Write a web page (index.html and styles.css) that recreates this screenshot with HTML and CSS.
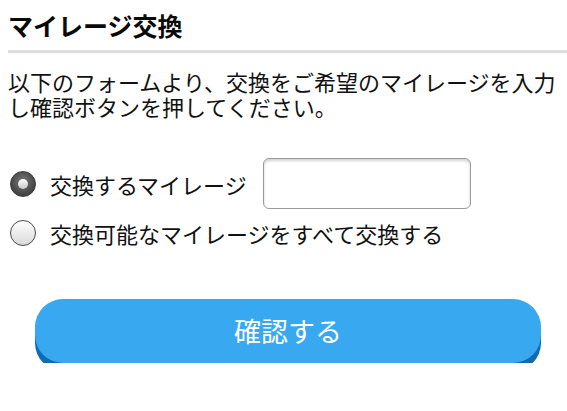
FILE: index.html
```html
<!DOCTYPE html>
<html lang="ja">
<head>
<meta charset="utf-8">
<link rel="stylesheet" href="styles.css">
</head>
<body>
<div class="page">
  <h1 class="title">マイレージ交換</h1>
  <p class="lead">以下のフォームより、交換をご希望のマイレージを入力し確認ボタンを押してください。</p>
  <form class="form">
    <label class="row">
      <input type="radio" name="mode" class="radio" checked>
      <span class="label">交換するマイレージ</span>
      <input type="text" class="field">
    </label>
    <label class="row row-all">
      <input type="radio" name="mode" class="radio">
      <span class="label">交換可能なマイレージをすべて交換する</span>
    </label>
    <div class="actions">
      <button type="button" class="btn">確認する</button>
    </div>
  </form>
</div>
</body>
</html>
```
FILE: styles.css
```css
* { box-sizing: border-box; }
html, body { margin: 0; padding: 0; background: #fff; }
body {
  font-family: "Noto Sans CJK JP", "Noto Sans", sans-serif;
  color: #111;
}
.page { padding: 9px 0 0 8px; }
.title {
  margin: 0;
  font-size: 25px;
  font-weight: bold;
  line-height: 32px;
  padding-bottom: 9px;
  border-bottom: 3px solid #dedede;
  color: #0a0a0a;
}
.lead {
  margin: 16px 0 0 0;
  padding-right: 8px;
  font-size: 22px;
  line-height: 25px;
  color: #111;
}
.form { margin-top: 39px; }
.row {
  display: flex;
  align-items: center;
}
.row-all { margin-top: 9px; height: 30px; }
.radio {
  appearance: none;
  -webkit-appearance: none;
  margin: 0 14px 0 2px;
  width: 26px;
  height: 26px;
  border-radius: 50%;
  border: 1.5px solid #4a4a4a;
  background: linear-gradient(#ffffff, #d9d9d9);
  flex: none;
  position: relative;
}
.radio:checked {
  border-color: #3a3a3a;
  background: radial-gradient(circle at 50% 40%, #7a7a7a 0%, #4a4a4a 60%, #2e2e2e 100%);
}
.radio:checked::after {
  content: "";
  position: absolute;
  left: 50%;
  top: 50%;
  width: 10px;
  height: 10px;
  margin: -5px 0 0 -5px;
  border-radius: 50%;
  background: linear-gradient(#ffffff, #c8c8c8);
}
.label {
  font-size: 22px;
  line-height: 30px;
}
.field {
  margin-left: 16px;
  width: 208px;
  height: 51px;
  border: 1px solid #9a9a9a;
  border-radius: 6px;
  box-shadow: inset 0 2px 3px rgba(0,0,0,0.18);
  background: #fff;
  font-size: 20px;
}
.actions {
  margin-top: 51px;
  padding-left: 27px;
}
.btn {
  display: block;
  width: 506px;
  height: 64px;
  border: 0;
  border-radius: 28px;
  background: #38a8f0;
  box-shadow: 0 8px 0 #0c6db4;
  color: #fff;
  font-family: "Noto Sans CJK JP", "Noto Sans", sans-serif;
  font-size: 27px;
  line-height: 64px;
  padding: 0;
}
```
